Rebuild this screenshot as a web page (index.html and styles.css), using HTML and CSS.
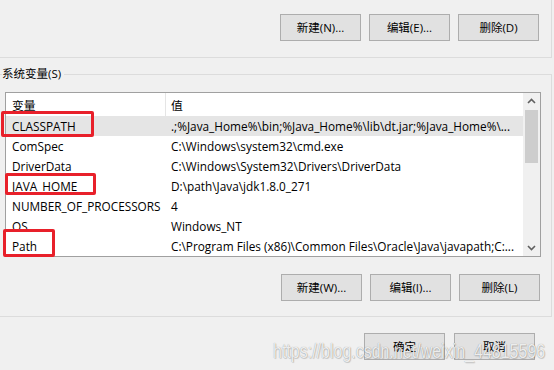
FILE: index.html
```html
<!DOCTYPE html>
<html lang="zh-CN">
<head>
<meta charset="utf-8">
<title>环境变量</title>
<link rel="stylesheet" href="styles.css">
</head>
<body>
<div class="window">
  <div class="group group-user">
    <div class="btn-row">
      <button class="btn">新建(N)...</button>
      <button class="btn">编辑(E)...</button>
      <button class="btn">删除(D)</button>
    </div>
  </div>

  <fieldset class="group group-sys">
    <legend class="legend">系统变量(S)</legend>
    <div class="listbox">
      <div class="list">
        <div class="list-header">
          <div class="cell c1 head">变量</div>
          <div class="cell c2">值</div>
        </div>
        <div class="row selected"><div class="cell c1">CLASSPATH</div><div class="cell c2">.;%Java_Home%\bin;%Java_Home%\lib\dt.jar;%Java_Home%\...</div></div>
        <div class="row"><div class="cell c1">ComSpec</div><div class="cell c2">C:\Windows\system32\cmd.exe</div></div>
        <div class="row"><div class="cell c1">DriverData</div><div class="cell c2">C:\Windows\System32\Drivers\DriverData</div></div>
        <div class="row"><div class="cell c1">JAVA_HOME</div><div class="cell c2">D:\path\Java\jdk1.8.0_271</div></div>
        <div class="row"><div class="cell c1">NUMBER_OF_PROCESSORS</div><div class="cell c2">4</div></div>
        <div class="row"><div class="cell c1">OS</div><div class="cell c2">Windows_NT</div></div>
        <div class="row"><div class="cell c1">Path</div><div class="cell c2">C:\Program Files (x86)\Common Files\Oracle\Java\javapath;C:...</div></div>
      </div>
      <div class="scrollbar">
        <div class="sb-btn">
          <svg width="17" height="17" viewBox="0 0 17 17"><path d="M5 10 L8.5 6.5 L12 10" fill="none" stroke="#606060" stroke-width="1.6"/></svg>
        </div>
        <div class="sb-track"><div class="sb-thumb"></div></div>
        <div class="sb-btn">
          <svg width="17" height="17" viewBox="0 0 17 17"><path d="M5 7 L8.5 10.5 L12 7" fill="none" stroke="#606060" stroke-width="1.6"/></svg>
        </div>
      </div>
    </div>
    <div class="btn-row lower">
      <button class="btn">新建(W)...</button>
      <button class="btn">编辑(I)...</button>
      <button class="btn">删除(L)</button>
    </div>
  </fieldset>

  <div class="dialog-row">
    <button class="btn">确定</button>
    <button class="btn">取消</button>
  </div>

  <div class="mark mark-classpath"></div>
  <div class="mark mark-javahome"></div>
  <div class="mark mark-path"></div>

  <div class="watermark">https://blog.csdn.net/weixin_44815596</div>
</div>
</body>
</html>
```

FILE: styles.css
```css
* {
  box-sizing: border-box;
}

html,
body {
  margin: 0;
  padding: 0;
}

body {
  background: #f0f0f0;
  font-family: "Open Sans", "Noto Sans CJK SC", sans-serif;
  font-size: 11.5px;
  color: #000;
}

.window {
  position: relative;
  width: 554px;
  height: 370px;
  overflow: hidden;
}

.group-user {
  width: 552px;
  height: 58px;
  border-right: 1px solid #dcdcdc;
  border-bottom: 1px solid #dcdcdc;
  padding: 14px 12px 0 0;
}

.btn-row {
  display: flex;
  justify-content: flex-end;
  gap: 8px;
}

.btn {
  width: 81px;
  height: 27px;
  padding: 0;
  margin: 0;
  background: #e1e1e1;
  border: 1px solid #adadad;
  font: inherit;
  color: #000;
  display: flex;
  align-items: center;
  justify-content: center;
  line-height: 1;
}

.group-sys {
  margin: 8px 0 0 0;
  width: 552px;
  min-width: 0;
  border: 1px solid #dcdcdc;
  border-left: none;
  padding: 10px 10px 15px 5px;
}

.legend {
  margin-left: -3px;
  padding: 0 3px 0 0;
  line-height: 16px;
  height: 16px;
}

.listbox {
  display: flex;
  height: 165px;
  border: 1px solid #a0a0a0;
  background: #fff;
  font-size: 11.8px;
}

.list {
  flex: 1;
  min-width: 0;
}

.list-header {
  display: flex;
  height: 23px;
}

.cell {
  white-space: nowrap;
  overflow: hidden;
  display: flex;
  align-items: center;
}

.c1 {
  width: 160px;
  flex: none;
  padding-left: 6px;
}

.c1.head {
  border-right: 1px solid #e5e5e5;
}

.c2 {
  flex: 1;
  min-width: 0;
  padding-left: 5px;
}

.row {
  display: flex;
  height: 20px;
}

.row.selected {
  background: #e5e5e5;
}

.scrollbar {
  width: 17px;
  flex: none;
  background: #f0f0f0;
  display: flex;
  flex-direction: column;
}

.sb-btn {
  height: 17px;
  flex: none;
}

.sb-btn svg {
  display: block;
}

.sb-track {
  flex: 1;
  padding: 0 2px;
}

.sb-thumb {
  height: 53px;
  background: #cdcdcd;
}

.btn-row.lower {
  margin-top: 17px;
  margin-right: 1px;
}

.dialog-row {
  display: flex;
  justify-content: flex-end;
  gap: 9px;
  margin-top: 16px;
  padding-right: 19px;
}

.mark {
  position: absolute;
  border: 3px solid #e8202a;
  border-radius: 2px;
}

.mark-classpath {
  left: 1px;
  top: 111px;
  width: 93px;
  height: 26px;
}

.mark-javahome {
  left: 5px;
  top: 173px;
  width: 91px;
  height: 22px;
}

.mark-path {
  left: 3px;
  top: 229px;
  width: 52px;
  height: 28px;
}

.watermark {
  position: absolute;
  left: 273px;
  top: 341px;
  font-family: "Liberation Sans", Arial, sans-serif;
  font-size: 20px;
  line-height: 20px;
  white-space: nowrap;
  color: rgba(255, 255, 255, 0.85);
  text-shadow: 0 0 1px rgba(0, 0, 0, 0.4), 1px 1px 1px rgba(0, 0, 0, 0.15);
  transform: scaleX(0.8);
  transform-origin: left top;
}
```
